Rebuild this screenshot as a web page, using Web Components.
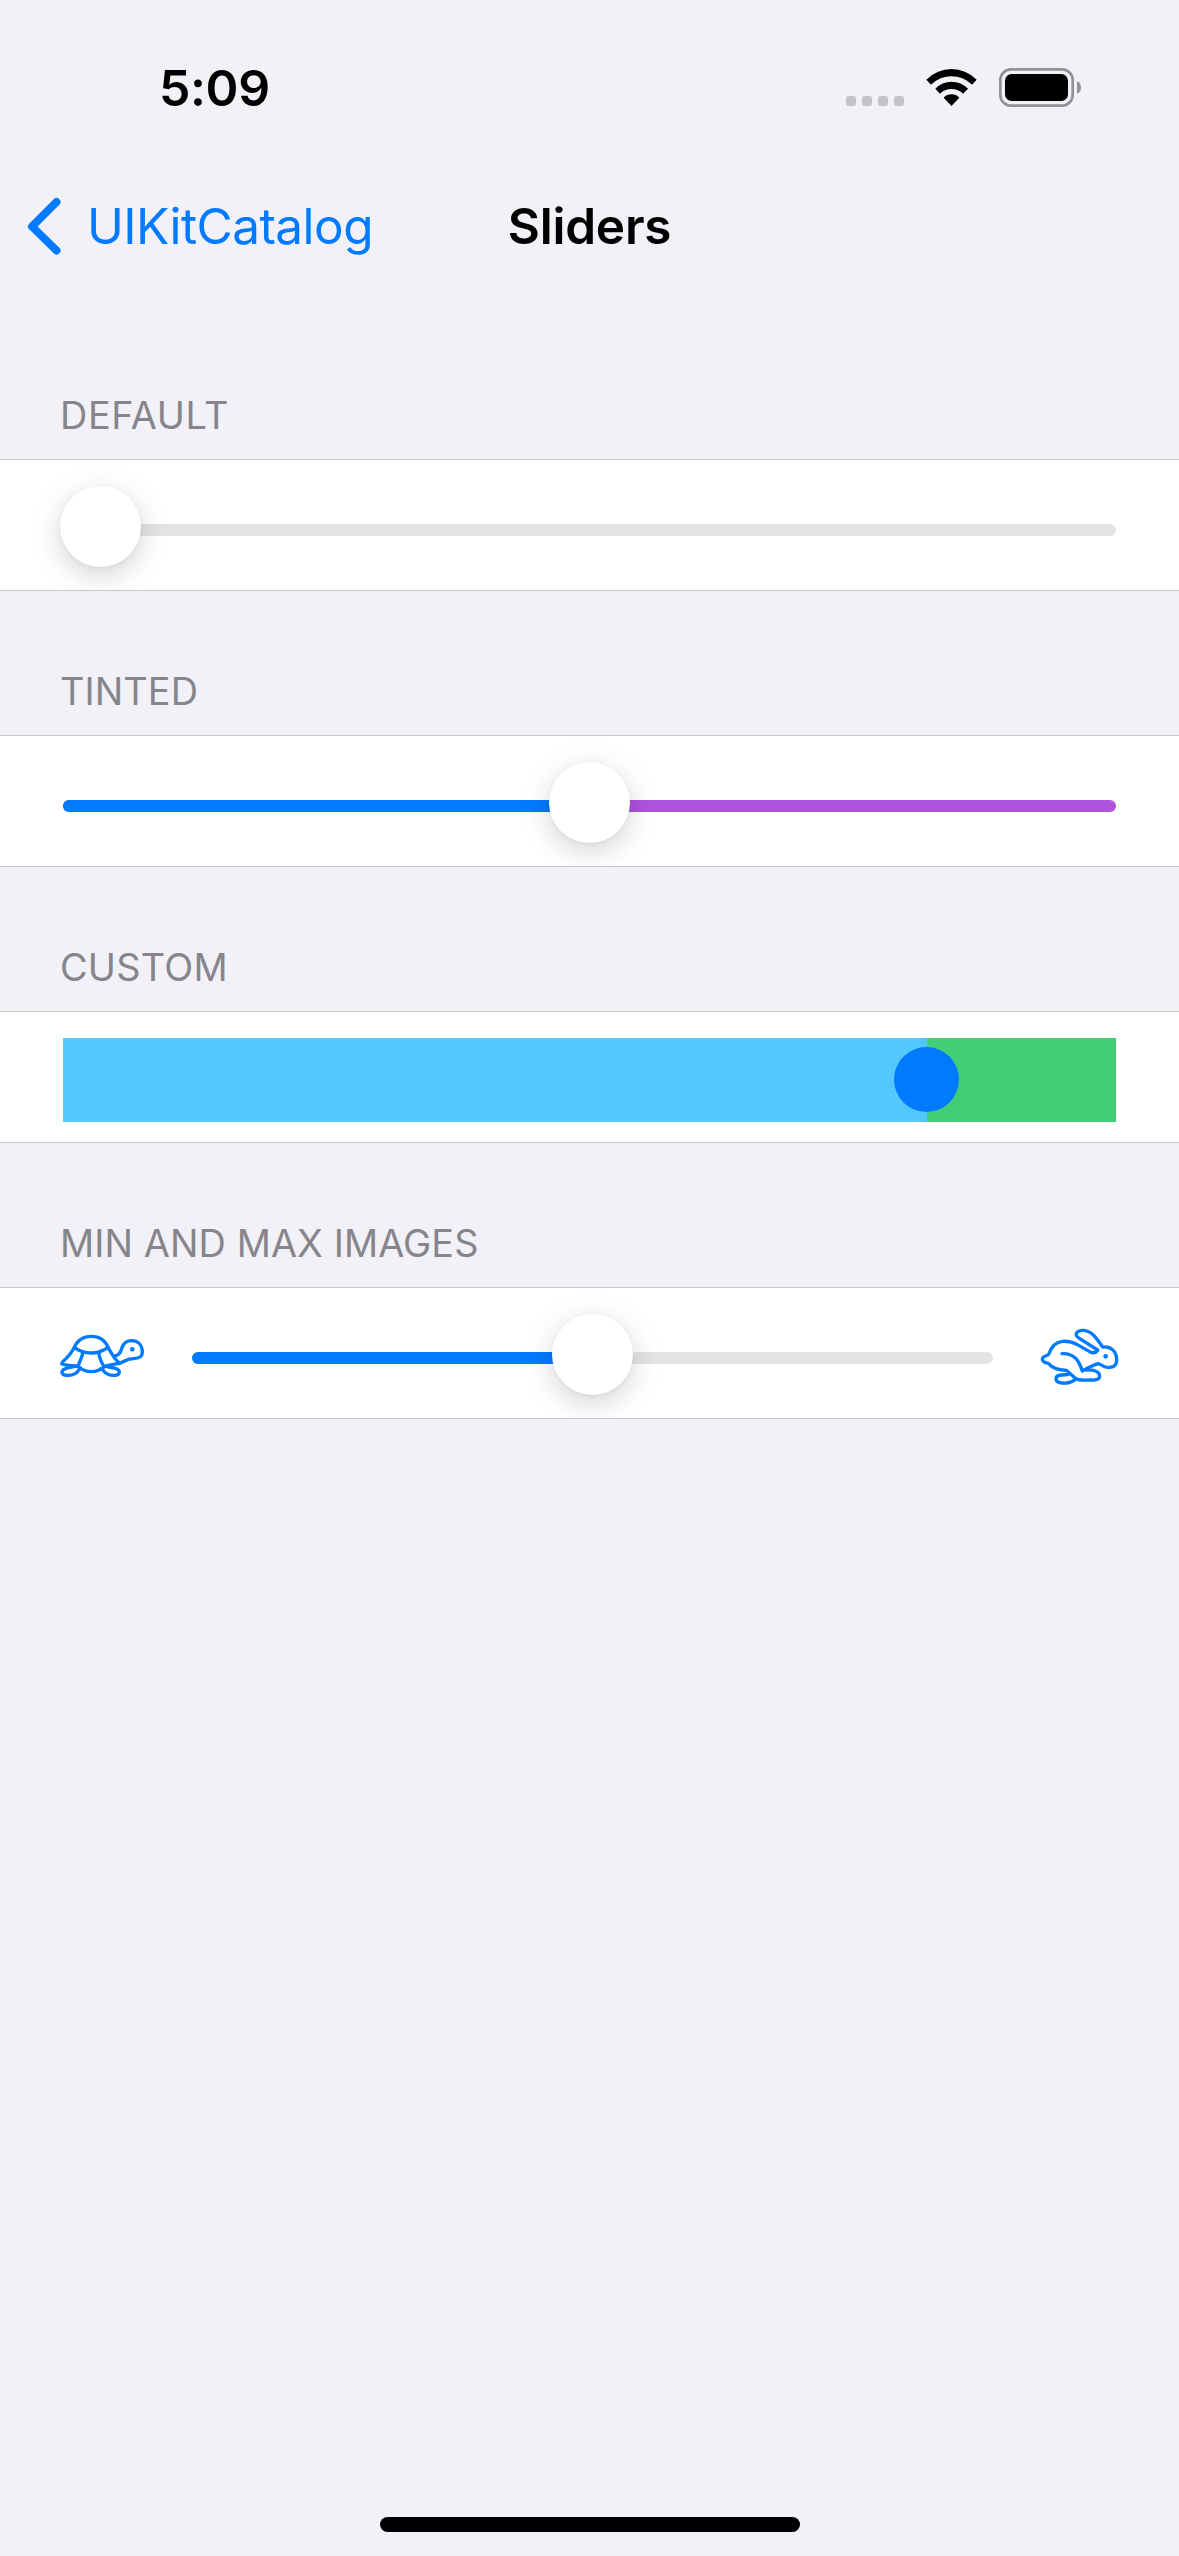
<!DOCTYPE html>
<html lang="en">
<head>
<meta charset="utf-8">
<title>Sliders</title>
<style>
html,body{margin:0;background:#f2f1f7}
body{width:1179px;height:2556px;overflow:hidden;font-family:Inter,"Liberation Sans",sans-serif}
</style>
</head>
<body>
<app-screen>
  <status-bar slot="status" time="5:09"></status-bar>
  <nav-bar slot="nav"><span slot="back">UIKitCatalog</span><span slot="title">Sliders</span></nav-bar>
  <slider-section><span slot="header" style="letter-spacing:.65px">DEFAULT</span>
    <ui-slider style="--at:-3px"></ui-slider></slider-section>
  <slider-section><span slot="header" style="letter-spacing:.1px">TINTED</span>
    <ui-slider style="--at:486px;--max:#af52de"></ui-slider></slider-section>
  <slider-section><span slot="header" style="letter-spacing:.25px">CUSTOM</span>
    <ui-slider style="--at:831px;--split:864px;--min:#55c7ff;--max:#42ce77;--track:84px;--track-top:27px;--round:0;--thumb:65px;--thumb-top:36px;--thumb-color:#007aff;--shadow:none"></ui-slider></slider-section>
  <slider-section><span slot="header" style="letter-spacing:.1px">MIN AND MAX IMAGES</span>
    <turtle-icon slot="min"></turtle-icon>
    <ui-slider style="--at:360px"></ui-slider>
    <hare-icon slot="max"></hare-icon></slider-section>
</app-screen>
<script>
const define = (name, html) => customElements.define(name, class extends HTMLElement {
  constructor() {
    super();
    this.attachShadow({mode: 'open'}).innerHTML = html;
  }
  connectedCallback() {
    const t = this.shadowRoot.querySelector('[data-time]');
    if (t) t.textContent = this.getAttribute('time');
  }
});

define('app-screen', `<style>
:host{display:flex;flex-direction:column;width:1179px;height:2556px;background:#f2f1f7}
main{flex:1;display:flex;flex-direction:column;padding-top:39px}
footer{height:39px;display:flex;justify-content:center;align-items:flex-start}
footer i{width:420px;height:15px;border-radius:8px;background:#000}
</style><slot name="status"></slot><slot name="nav"></slot><main><slot></slot></main><footer><i></i></footer>`);

define('status-bar', `<style>
:host{display:flex;height:176px;box-sizing:border-box;padding:58px 97px 0 159px;justify-content:space-between;align-items:flex-start}
b{font-size:50px;line-height:60px;font-weight:600;letter-spacing:-.4px}
svg{display:block;width:236px;height:40px;margin-top:9px}
</style><b data-time></b>
<svg viewBox="78 51 708 120">
<g fill="#c4c3c8"><rect x="78" y="138" width="30" height="30" rx="8"/><rect x="126" y="138" width="30" height="30" rx="8"/><rect x="174" y="138" width="30" height="30" rx="8"/><rect x="222" y="138" width="30" height="30" rx="8"/></g>
<path d="M319 89Q352 57 394.500 57T470 89L456 104Q429 79 394.500 79T333 104Z"/>
<path d="M346 116Q366 95 394.500 95T444 116L429 131Q415 117 394.500 117T360 131Z"/>
<path d="M371 143Q381 133 394.500 133T418 143L394.500 168Z"/>
<rect x="541" y="58" width="217" height="109" rx="32" fill="none" stroke="#929196" stroke-width="8"/>
<rect x="555" y="72" width="189" height="81" rx="20"/>
<path d="M771 94Q783 99 783 112.500T771 131Z" fill="#929196"/>
</svg>`);

define('nav-bar', `<style>
:host{display:grid;grid-template-columns:1fr auto 1fr;height:132px;padding:0 27px;align-items:start;font-size:49.5px;line-height:60px}
.back{display:flex;color:#007aff;letter-spacing:-.55px}
svg{width:36px;height:58px;margin:21px 24px 0 0;flex:none}
.back div,.title{padding-top:20px;white-space:nowrap}
.title{font-weight:600;letter-spacing:-.2px}
</style><div class="back"><svg viewBox="0 0 36 58"><path d="M29.500 5L5 29.500L29.500 53.500" fill="none" stroke="#007aff" stroke-width="8" stroke-linecap="round" stroke-linejoin="round"/></svg><div><slot name="back"></slot></div></div>
<div class="title"><slot name="title"></slot></div>`);

define('slider-section', `<style>
:host{display:flex;flex-direction:column;height:276px}
header{box-sizing:border-box;height:112px;padding:44px 60px 0;font-size:37.8px;line-height:48px;color:#86858b}
.row{display:flex;height:130px;background:#fff;border:solid #c6c6c9;border-width:1px 0;padding:0 63px;overflow:hidden}
::slotted(ui-slider){flex:1}
</style><header><slot name="header"></slot></header>
<div class="row"><slot name="min"></slot><slot></slot><slot name="max"></slot></div>`);

define('ui-slider', `<style>
:host{display:grid;grid-template-columns:minmax(0,1fr);align-items:start;height:130px;margin-top:-1px}
.track,.thumb{grid-area:1/1}
.track{display:flex;height:var(--track,12px);margin-top:var(--track-top,65px);border-radius:var(--round,6px);background:var(--max,#e4e4e6);overflow:hidden}
.fill{width:var(--split,calc(var(--at) + 38px));background:var(--min,#007aff)}
.thumb{position:relative;width:var(--thumb,81px);height:var(--thumb,81px);border-radius:50%;background:var(--thumb-color,#fff);box-shadow:var(--shadow,0 1px 4px #0000000c,0 9px 24px #0000001c,0 6px 42px #00000012);margin-left:var(--at);margin-top:var(--thumb-top,27px)}
</style><div class="track"><div class="fill"></div></div><div class="thumb"></div>`);

define('turtle-icon', `<style>
:host{display:block;width:129px;flex:none}
svg{display:block;width:86px;height:46px;margin:46px 0 0 -4px}
</style><svg viewBox="57 42 258 138" fill="none" stroke="#007aff" stroke-width="10" stroke-linecap="round" stroke-linejoin="round">
<path d="M103 82C113 59 130 49 154 49C179 49 195 60 204 82C213 99 224 117 238 130C224 132 206 135 195 139C181 150 168 155 154 155C137 155 124 148 111 138C95 137 75 136 65 131C66 124 73 121 79 115C91 104 96 94 103 82Z"/>
<path d="M104 83C119 95 135 99 154 99C173 99 188 94 204 82M128 98C128 112 118 122 115 138M177 98C177 112 184 126 191 138"/>
<path d="M225 108C239 105 242 96 246 83C251 69 260 62 275 62C296 62 307 77 307 97C307 111 298 115 280 116C256 117 252 126 238 130"/>
<path d="M111 138C96 142 66 143 66 157C66 170 93 168 107 160C116 155 114 148 122 145M191 138C208 143 238 142 238 157C238 170 211 168 199 160C190 155 191 149 182 146"/>
<circle cx="277" cy="88" r="7" fill="#007aff" stroke="none"/></svg>`);

define('hare-icon', `<style>
:host{display:block;width:123px;flex:none}
svg{display:block;width:80px;height:60px;margin:39px 0 0 47px}
</style><svg viewBox="120 81 240 180" fill="none" stroke="#007aff" stroke-width="10" stroke-linecap="round" stroke-linejoin="round">
<path d="M293 150C288 158 279 160 269 155L232 134C218 126 204 123 188 124C165 126 154 141 147 161C143 169 127 168 127 177C127 187 136 188 145 190C160 208 178 210 199 211L228 236C237 243 255 240 272 240C288 241 299 238 299 228C299 213 279 209 258 210"/>
<path d="M293 150L239 116C222 105 226 94 247 91C271 90 286 108 308 141C333 138 350 154 350 180C350 198 339 203 321 202C310 202 304 193 294 191C279 196 263 204 247 213C242 198 237 184 226 174C214 163 202 160 186 161"/>
<path d="M204 224C189 225 168 222 168 236C168 249 188 250 201 249C213 248 220 243 228 236"/>
<circle cx="317" cy="169" r="7" fill="#007aff" stroke="none"/></svg>`);
</script>
</body>
</html>
